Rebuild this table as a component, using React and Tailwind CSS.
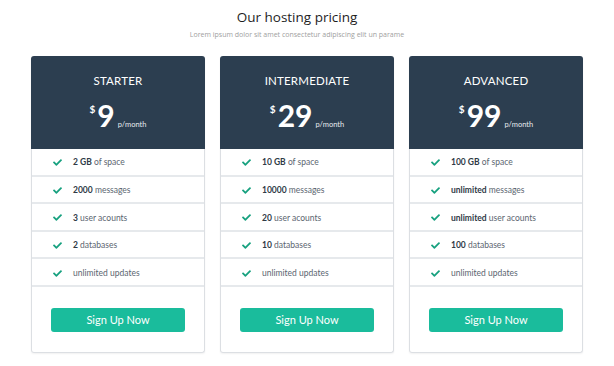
import React from "react";
import { FaCheck } from "react-icons/fa";

const plans = [
  {
    name: "STARTER",
    price: "9",
    features: [
      ["2 GB", " of space"],
      ["2000", " messages"],
      ["3", " user acounts"],
      ["2", " databases"],
      ["", "unlimited updates"],
    ],
  },
  {
    name: "INTERMEDIATE",
    price: "29",
    features: [
      ["10 GB", " of space"],
      ["10000", " messages"],
      ["20", " user acounts"],
      ["10", " databases"],
      ["", "unlimited updates"],
    ],
  },
  {
    name: "ADVANCED",
    price: "99",
    features: [
      ["100 GB", " of space"],
      ["unlimited", " messages"],
      ["unlimited", " user acounts"],
      ["100", " databases"],
      ["", "unlimited updates"],
    ],
  },
];

function Card({ plan }) {
  return (
    <div className="w-[174px] flex flex-col shadow-[0_1px_2px_rgba(0,0,0,0.06)] rounded-[3px]">
      <div className="h-[93px] bg-[#2c3e50] rounded-t-[3px] flex flex-col items-center pt-[16px] text-white">
        <div className="text-[11.5px] leading-[18px] tracking-[0.2px]">{plan.name}</div>
        <div className="flex mt-[10px] leading-none">
          <span className="text-[10px] font-bold mt-[4px] mr-[2px]">$</span>
          <span className="text-[30px] font-bold leading-[30px]">{plan.price}</span>
          <span className="text-[7.5px] self-end ml-[3px] mb-[2px] text-[#e6eaee]">p/month</span>
        </div>
      </div>
      <div className="border-x border-b border-[#dcdfe3] rounded-b-[3px]">
        {plan.features.map(([b, r], i) => (
          <div
            key={i}
            className="h-[27.6px] pt-[2px] border-b-2 border-[#e6e9ec] flex items-center pl-[21px] text-[8.5px]"
          >
            <FaCheck className="text-[#17a17f] w-[9px] h-[9px]" />
            <span className="ml-[11px] text-[#5b6570]">
              {b && <b className="font-bold text-[#2f3a46]">{b}</b>}
              {r}
            </span>
          </div>
        ))}
        <div className="pt-[21px] pb-[20px] px-[19px]">
          <div className="h-[24px] rounded-[3px] bg-[#1abc9c] text-white text-[11px] flex items-center justify-center">
            Sign Up Now
          </div>
        </div>
      </div>
    </div>
  );
}

export default function App() {
  return (
    <div
      className="w-[614px] h-[366px] bg-white"
      style={{ fontFamily: "Lato, 'Open Sans', sans-serif" }}
    >
      <div className="pt-[6px] pr-[20px] text-center" style={{ fontFamily: "'Open Sans', sans-serif" }}>
        <div className="text-[13.5px] leading-[23px] text-[#1e1e1e]">Our hosting pricing</div>
        <div className="text-[7px] leading-[12px] text-[#a0a0a0]">
          Lorem ipsum dolor sit amet consectetur adipiscing elit un parame
        </div>
      </div>
      <div className="flex justify-center gap-[15px] mt-[15px]">
        {plans.map((p) => (
          <Card key={p.name} plan={p} />
        ))}
      </div>
    </div>
  );
}
